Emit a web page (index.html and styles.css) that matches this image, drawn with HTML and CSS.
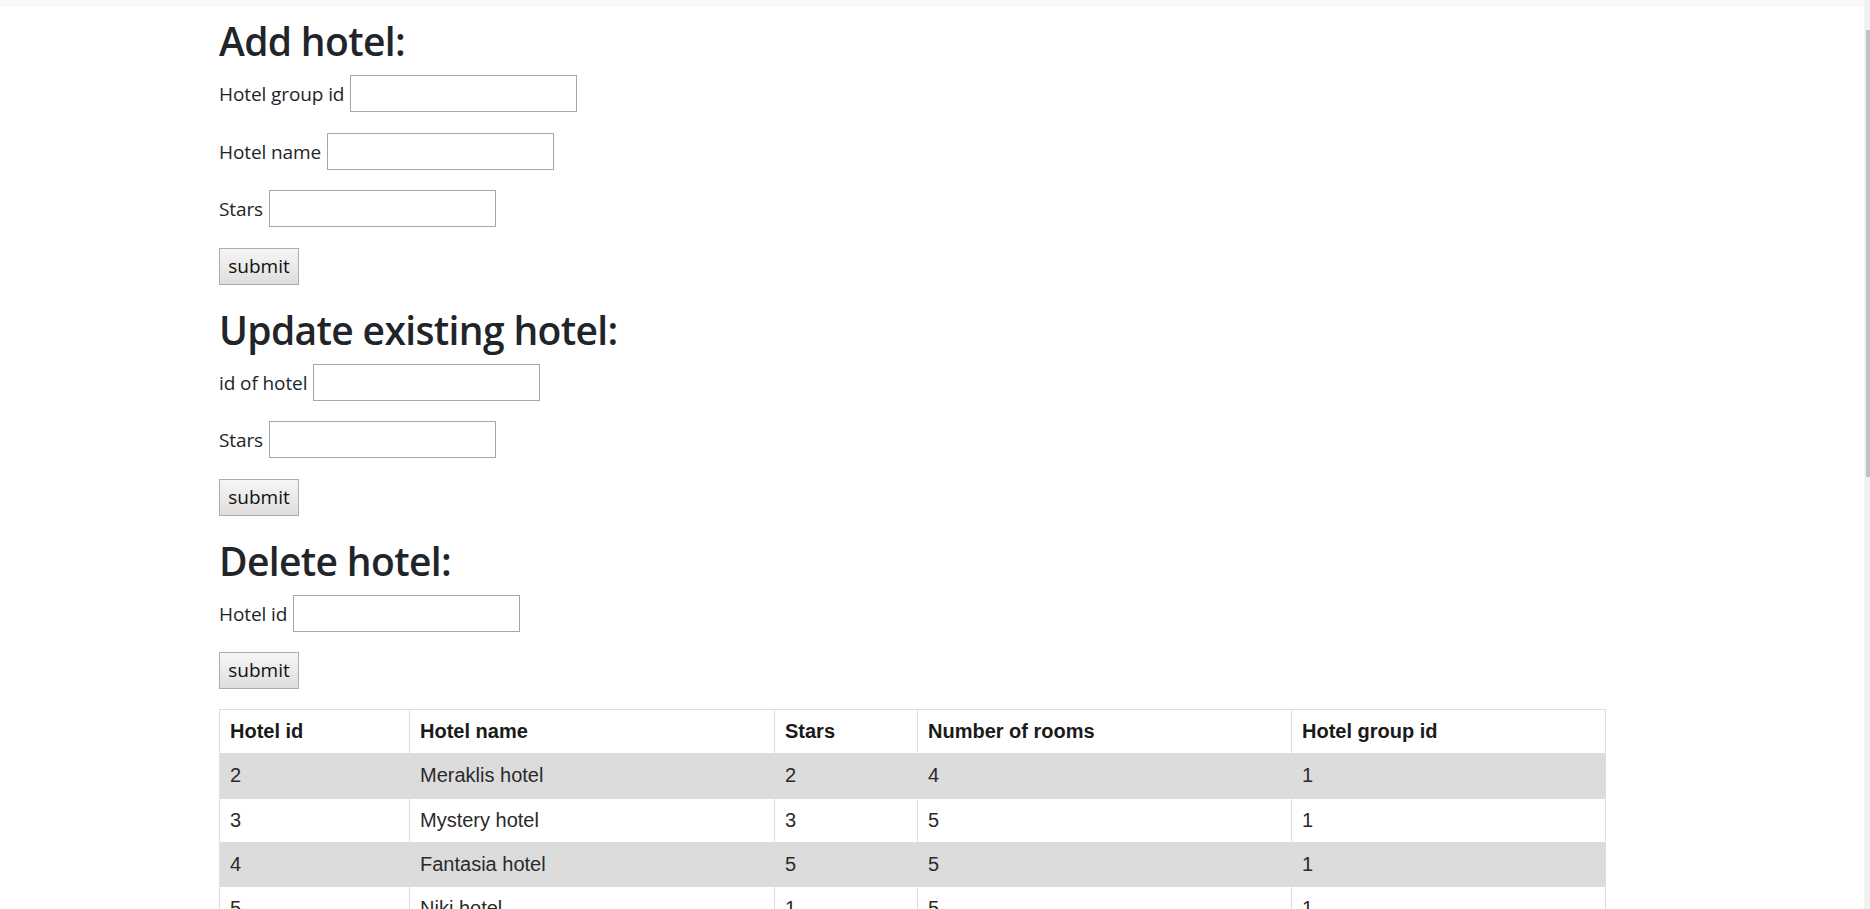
FILE: index.html
```html
<!DOCTYPE html>
<html lang="en">
<head>
<meta charset="utf-8">
<title>Hotels</title>
<link rel="stylesheet" href="styles.css">
</head>
<body>
<div class="topbar"></div>
<main class="page">
  <section class="block">
    <h1 class="title">Add hotel:</h1>
    <form class="form">
      <div class="field"><label>Hotel group id</label><input class="input" type="text"></div>
      <div class="field"><label>Hotel name</label><input class="input" type="text"></div>
      <div class="field"><label>Stars</label><input class="input" type="text"></div>
      <div class="field"><button class="btn" type="button">submit</button></div>
    </form>
  </section>
  <section class="block">
    <h1 class="title">Update existing hotel:</h1>
    <form class="form">
      <div class="field"><label>id of hotel</label><input class="input" type="text"></div>
      <div class="field"><label>Stars</label><input class="input" type="text"></div>
      <div class="field"><button class="btn" type="button">submit</button></div>
    </form>
  </section>
  <section class="block">
    <h1 class="title">Delete hotel:</h1>
    <form class="form">
      <div class="field"><label>Hotel id</label><input class="input" type="text"></div>
      <div class="field"><button class="btn" type="button">submit</button></div>
    </form>
  </section>
  <table class="grid">
    <colgroup>
      <col class="c1"><col class="c2"><col class="c3"><col class="c4"><col class="c5">
    </colgroup>
    <thead>
      <tr><th>Hotel id</th><th>Hotel name</th><th>Stars</th><th>Number of rooms</th><th>Hotel group id</th></tr>
    </thead>
    <tbody>
      <tr><td>2</td><td>Meraklis hotel</td><td>2</td><td>4</td><td>1</td></tr>
      <tr><td>3</td><td>Mystery hotel</td><td>3</td><td>5</td><td>1</td></tr>
      <tr><td>4</td><td>Fantasia hotel</td><td>5</td><td>5</td><td>1</td></tr>
      <tr><td>5</td><td>Niki hotel</td><td>1</td><td>5</td><td>1</td></tr>
    </tbody>
  </table>
</main>
<div class="scrollbar"><div class="thumb"></div></div>
</body>
</html>
```
FILE: styles.css
```css
html { scrollbar-width: none; }
html::-webkit-scrollbar { display: none; }
body {
  margin: 0;
  font-family: "Segoe UI", "Open Sans", sans-serif;
  font-size: 19px;
  color: #212529;
  background: #fff;
}
.topbar {
  height: 7px;
  width: 1864px;
  background: #f8f9fa;
}
.page {
  width: 1386px;
  margin-left: 219px;
  display: flex;
  flex-direction: column;
  gap: 25px;
  padding-top: 14px;
  padding-bottom: 40px;
}
.block {
  display: flex;
  flex-direction: column;
  gap: 14px;
}
.block:last-of-type { margin-bottom: -5px; }
.title {
  margin: 0;
  font-size: 39px;
  line-height: 40px;
  font-weight: 600;
  letter-spacing: -0.65px;
}
.form {
  display: flex;
  flex-direction: column;
  gap: 20.5px;
}
.field {
  display: flex;
  align-items: center;
  gap: 6px;
  height: 37px;
}
.field label { line-height: 37px; padding-top: 2px; letter-spacing: -0.1px; }
.input {
  box-sizing: border-box;
  width: 227px;
  height: 37px;
  border: 1px solid #a6a6a6;
  background: #fff;
  margin: 0;
  padding: 0 4px;
  font: inherit;
}
.btn {
  box-sizing: border-box;
  width: 80px;
  height: 37px;
  padding: 0;
  margin: 0;
  border: 1px solid #adadad;
  background: linear-gradient(#f6f6f6, #dedede);
  font: inherit;
  color: #111;
  line-height: 35px;
}
.grid {
  width: 1386px;
  table-layout: fixed;
  border-collapse: collapse;
  font-family: "Liberation Sans", Arial, sans-serif;
  font-size: 20px;
  color: #2a2a2a;
}
.c1 { width: 190px; }
.c2 { width: 365px; }
.c3 { width: 143px; }
.c4 { width: 374px; }
.c5 { width: 314px; }
.grid th, .grid td {
  border: 1px solid #dddddd;
  padding: 10px 10px;
  line-height: 23.3px;
  text-align: left;
  white-space: nowrap;
}
.grid th { font-weight: bold; color: #1a1a1a; }
.grid tbody tr:nth-child(odd) { background: #dcdcdc; }
.scrollbar {
  position: fixed;
  top: 0;
  right: 0;
  width: 6px;
  height: 100%;
  background: #f0f0f0;
}
.thumb {
  position: absolute;
  top: 30px;
  left: 2px;
  width: 4px;
  height: 447px;
  background: #c1c1c1;
}
```
